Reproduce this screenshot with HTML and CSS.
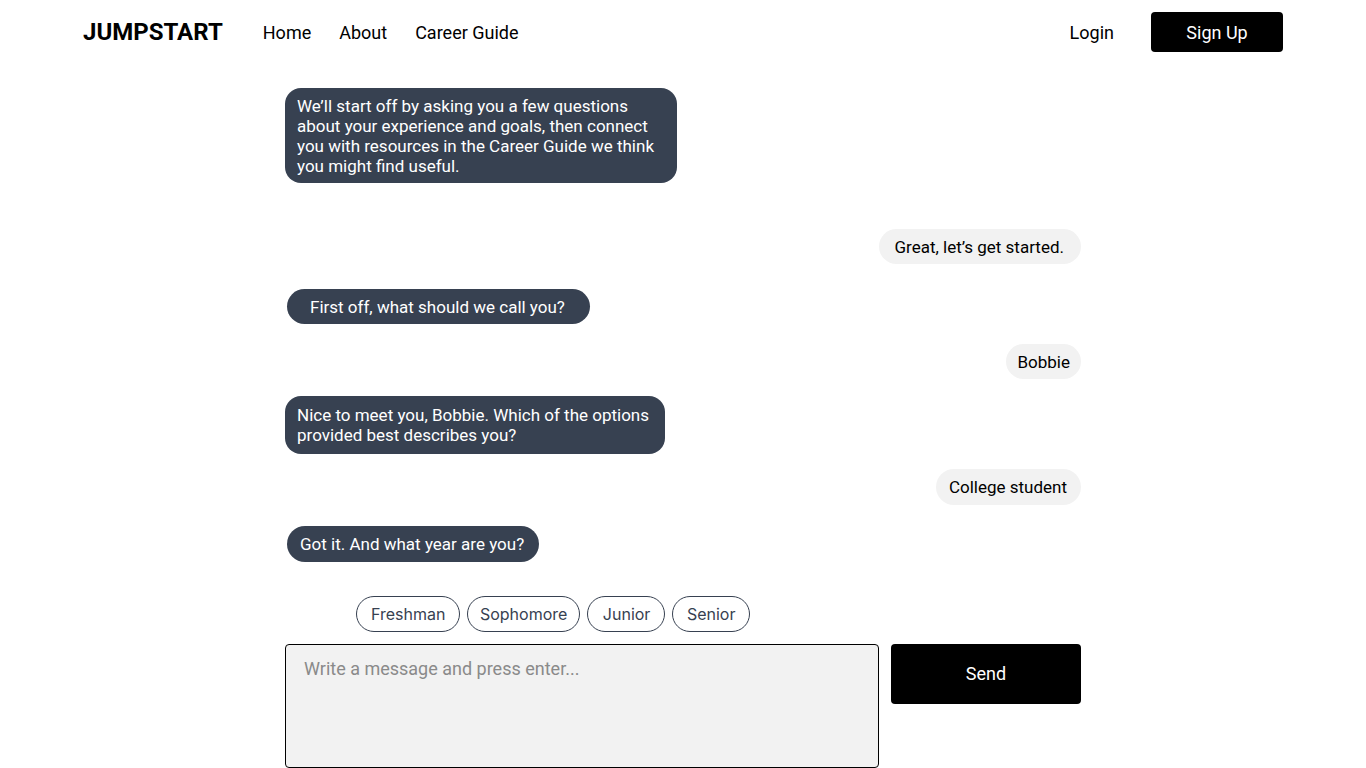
FILE: index.html
```html
<!DOCTYPE html>
<html lang="en">
<head>
<meta charset="utf-8">
<title>Jumpstart</title>
<link rel="stylesheet" href="styles.css">
</head>
<body>
<header class="topbar">
  <div class="brand">JUMPSTART</div>
  <nav class="nav">
    <a href="#">Home</a>
    <a href="#">About</a>
    <a href="#">Career Guide</a>
  </nav>
  <div class="auth">
    <a href="#" class="login">Login</a>
    <a href="#" class="signup">Sign Up</a>
  </div>
</header>
<main class="chat">
  <div class="msg bot b-intro">We’ll start off by asking you a few questions about your experience and goals, then connect you with resources in the Career Guide we think you might find useful.</div>
  <div class="msg user u-great">Great, let’s get started.</div>
  <div class="msg bot b-name">First off, what should we call you?</div>
  <div class="msg user u-bobbie">Bobbie</div>
  <div class="msg bot b-nice">Nice to meet you, Bobbie. Which of the options provided best describes you?</div>
  <div class="msg user u-college">College student</div>
  <div class="msg bot b-year">Got it. And what year are you?</div>
  <div class="chips">
    <button class="chip chip-fresh">Freshman</button>
    <button class="chip chip-soph">Sophomore</button>
    <button class="chip chip-jun">Junior</button>
    <button class="chip chip-sen">Senior</button>
  </div>
  <div class="composer">
    <textarea class="input" placeholder="Write a message and press enter..."></textarea>
    <button class="send">Send</button>
  </div>
</main>
</body>
</html>
```
FILE: styles.css
```css
* { box-sizing: border-box; }
html, body { margin: 0; padding: 0; background: #fff; }
body { font-family: Roboto, "Noto Sans", Arial, sans-serif; color: #000; }
a { color: inherit; text-decoration: none; }

.topbar {
  height: 64px;
  display: flex;
  align-items: center;
  padding: 0 83px;
}
.brand { font-size: 24px; font-weight: 700; letter-spacing: 0; }
.nav { display: flex; gap: 28px; margin-left: 40px; font-size: 18px; }
.auth { margin-left: auto; display: flex; align-items: center; gap: 37px; font-size: 18px; }
.signup {
  background: #000; color: #fff; width: 132px; height: 40px;
  border-radius: 4px; display: flex; align-items: center; justify-content: center;
}

.chat {
  width: 796px;
  margin: 0 auto;
  padding-top: 24px;
  display: flex;
  flex-direction: column;
}
.msg {
  font-size: 17px;
  line-height: 20px;
  padding: 8px 12px;
  border-radius: 18px;
  width: fit-content;
}
.bot { background: #374151; color: #fff; align-self: flex-start; }
.user { background: #f2f2f2; color: #000; align-self: flex-end; }

.b-intro { max-width: 392px; padding: 8px 12px 7px; border-radius: 16px; }
.u-great { margin-top: 46px; padding: 8px 17px 7px 16px; }
.b-name { margin-top: 25px; margin-left: 2px; padding: 8px 25px 7px 23px; }
.u-bobbie { margin-top: 20px; padding: 8px 11px 7px; }
.b-nice { margin-top: 17px; max-width: 380px; padding: 9px 12px; border-radius: 16px; }
.u-college { margin-top: 15px; padding: 8px 14px 8px 13px; }
.b-year { margin-top: 21px; margin-left: 2px; padding: 8px 15px 8px 13px; }

.chips { display: flex; gap: 7px; margin-top: 34px; margin-left: 71px; }
.chip {
  font-family: Inter, Roboto, sans-serif;
  font-size: 16px;
  color: #374151;
  background: #fff;
  border: 1px solid #374151;
  border-radius: 18px;
  height: 36px;
  padding: 0 14px;
}
.chip-fresh { padding: 0 14px; }
.chip-soph { padding: 0 11.5px; }
.chip-jun { padding: 0 14px 0 15px; }
.chip-sen { padding: 0 13.5px; }

.composer { display: flex; gap: 12px; margin-top: 12px; align-items: flex-start; }
.input {
  width: 594px; height: 124px;
  background: #f2f2f2;
  border: 1px solid #000;
  border-radius: 4px;
  padding: 13px 18px;
  font-family: Roboto, sans-serif;
  font-size: 18px;
  resize: none;
}
.input::placeholder { color: #8a8a8a; }
.send {
  width: 190px; height: 60px;
  background: #000; color: #fff;
  border: none; border-radius: 4px;
  padding-bottom: 2px;
  font-family: Roboto, sans-serif; font-size: 18px;
}
```
